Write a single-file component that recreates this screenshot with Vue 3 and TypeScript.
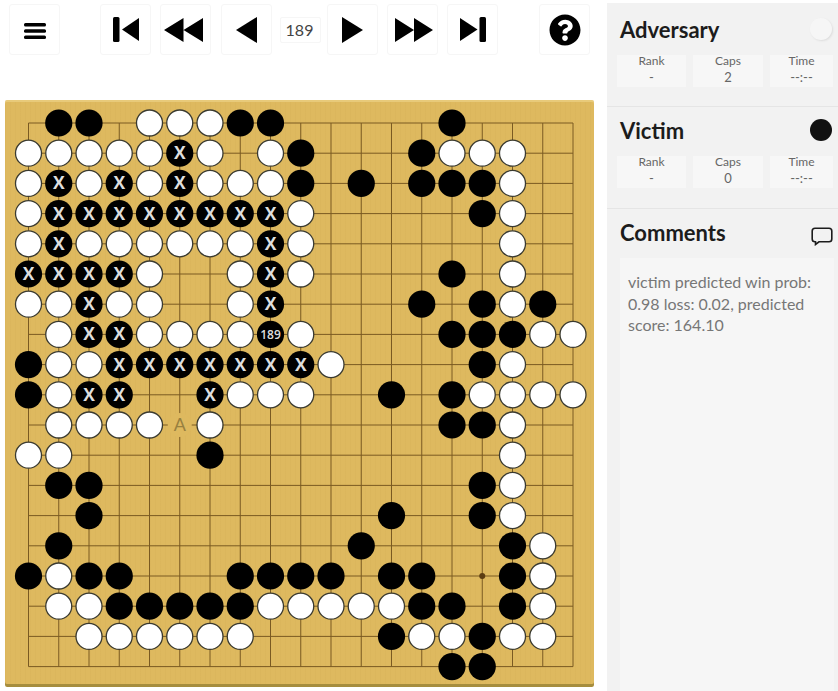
<template>
  <div class="page">
    <div class="main">
      <div class="toolbar">
        <button class="tool menu">
          <svg width="22" height="16" viewBox="0 0 22 16">
            <rect x="0" y="0" width="22" height="3.400" rx="1.500" />
            <rect x="0" y="6.300" width="22" height="3.400" rx="1.500" />
            <rect x="0" y="12.600" width="22" height="3.400" rx="1.500" />
          </svg>
        </button>
        <div class="nav">
          <button class="tool">
            <svg width="26" height="25" viewBox="0 0 26 25">
              <rect x="0" y="0" width="6.500" height="25" rx="1.500" />
              <path d="M9 12.500 26 1V24Z" />
            </svg>
          </button>
          <button class="tool shift-left">
            <svg width="39" height="24" viewBox="0 0 39 24">
              <path d="M0 12 19.500 0V24ZM19.500 12 39 0V24Z" />
            </svg>
          </button>
          <button class="tool prev">
            <svg width="21" height="26" viewBox="0 0 21 26">
              <path d="M0 13 21 0V26Z" />
            </svg>
          </button>
          <div class="move">189</div>
          <button class="tool">
            <svg width="21" height="26" viewBox="0 0 21 26">
              <path d="M21 13 0 0V26Z" />
            </svg>
          </button>
          <button class="tool shift-right">
            <svg width="38" height="24" viewBox="0 0 38 24">
              <path d="M38 12 19 0V24ZM19 12 0 0V24Z" />
            </svg>
          </button>
          <button class="tool">
            <svg width="26" height="25" viewBox="0 0 26 25">
              <rect x="19.500" y="0" width="6.500" height="25" rx="1.500" />
              <path d="M17.500 12.500 0 1V24Z" />
            </svg>
          </button>
        </div>
        <button class="tool help">
          <svg width="32" height="32" viewBox="0 0 512 512">
            <path
              d="M504 256c0 136.997-111.043 248-248 248S8 392.997 8 256C8 119.083 119.043 8 256 8s248 111.083 248 248zM262.655 90c-54.497 0-89.255 22.957-116.549 63.758-3.536 5.286-2.353 12.415 2.715 16.258l34.699 26.31c5.205 3.947 12.621 3.008 16.665-2.122 17.864-22.658 30.113-35.797 57.303-35.797 20.429 0 45.698 13.148 45.698 32.958 0 14.976-12.363 22.667-32.534 33.976C247.128 238.528 216 254.941 216 296v4c0 6.627 5.373 12 12 12h56c6.627 0 12-5.373 12-12v-1.333c0-28.462 83.186-29.647 83.186-106.667 0-58.002-60.165-102-116.531-102zM256 338c-25.365 0-46 20.635-46 46 0 25.364 20.635 46 46 46s46-20.636 46-46c0-25.365-20.635-46-46-46z"
            />
          </svg>
        </button>
      </div>

      <div class="board">
        <svg width="589" height="587" viewBox="0 0 589 587">
          <g class="grid">
            <line v-for="n in 19" :key="'h' + n" :x1="gx(0)" :x2="gx(18)" :y1="gy(n - 1)" :y2="gy(n - 1)" />
            <line v-for="n in 19" :key="'v' + n" :x1="gx(n - 1)" :x2="gx(n - 1)" :y1="gy(0)" :y2="gy(18)" />
          </g>
          <circle v-for="s in stars" :key="s.key" :cx="gx(s.c)" :cy="gy(s.r)" r="3" fill="#5c3d12" />
          <g v-for="s in stones" :key="s.key">
            <template v-if="s.kind === 'A'">
              <circle :cx="gx(s.c)" :cy="gy(s.r)" r="12" fill="#deb95f" />
              <text class="label-a" :x="gx(s.c)" :y="gy(s.r) + 5.500">A</text>
            </template>
            <template v-else-if="s.kind === 'W'">
              <circle class="white" :cx="gx(s.c)" :cy="gy(s.r)" r="13" />
            </template>
            <template v-else>
              <circle class="black" :cx="gx(s.c)" :cy="gy(s.r)" r="13.600" />
              <text v-if="s.kind === 'X'" class="label-x" :x="gx(s.c)" :y="gy(s.r) + 6">X</text>
              <text v-if="s.kind === 'N'" class="label-n" :x="gx(s.c)" :y="gy(s.r) + 4.500">189</text>
            </template>
          </g>
        </svg>
      </div>
    </div>

    <aside class="side">
      <section v-for="p in players" :key="p.name" class="player">
        <div class="head">
          <h2>{{ p.name }}</h2>
          <span class="dot" :class="p.dot"></span>
        </div>
        <div class="stats">
          <div class="stat">
            <span>Rank</span>
            <b>-</b>
          </div>
          <div class="stat">
            <span>Caps</span>
            <b>{{ p.caps }}</b>
          </div>
          <div class="stat">
            <span>Time</span>
            <b>--:--</b>
          </div>
        </div>
      </section>
      <section class="comments">
        <div class="head">
          <h2>Comments</h2>
          <svg class="bubble" width="22" height="19" viewBox="0 0 22 19">
            <path d="M4 1.200H18Q20.800 1.200 20.800 4V12Q20.800 14.800 18 14.800H8L4.500 17.500V14.800H4Q1.200 14.800 1.200 12V4Q1.200 1.200 4 1.200Z" />
          </svg>
        </div>
        <div class="comment-box">victim predicted win prob: 0.98 loss: 0.02, predicted score: 164.10</div>
      </section>
    </aside>
  </div>
</template>

<script setup lang="ts">
const position = [
  '.BB.WWWBB.....B....',
  'WWWWWXW.WB...BWWW..',
  'WXWXWXWWWB.B.BBBW..',
  'WXXXXXXXXW.....BW..',
  'WXWWWWWWXW......W..',
  'XXXXW..WXW....B.W..',
  'WWXWW..WX....B.BWB.',
  '.WXXWWWWNW....BBBWW',
  'BWWXXXXXXXW....BW..',
  'BWXX..XWWW..B.BWWWW',
  '.WWWWAW.......BBW..',
  'WW....B.........W..',
  '.BB............BW..',
  '..B.........B..BW..',
  '.B.........B....BW.',
  'BWBB...BBBB.BB..BW.',
  '.WWBBBBBWWWWWBB.BW.',
  '..WWWWWW....BWWBWW.',
  '..............BB...',
]

const STEP_X = 30.25
const STEP_Y = 30.2
const gx = (c: number) => 23.5 + c * STEP_X
const gy = (r: number) => 23 + r * STEP_Y

const stones = position.flatMap((row, r) =>
  row
    .split('')
    .map((kind, c) => ({ kind, r, c, key: `${r}-${c}` }))
    .filter((s) => s.kind !== '.'),
)

const stars = [3, 9, 15].flatMap((r) => [3, 9, 15].map((c) => ({ r, c, key: `${r}:${c}` })))

const players = [
  { name: 'Adversary', dot: 'light', caps: 2 },
  { name: 'Victim', dot: 'dark', caps: 0 },
]
</script>

<style>
body {
  background: #fff;
}
</style>

<style scoped>
.page {
  width: 838px;
  height: 691px;
  display: flex;
  overflow: hidden;
  font-family: Lato, "Open Sans", sans-serif;
}

.main {
  width: 607px;
  flex: none;
  padding: 4px 0 0 5px;
  box-sizing: border-box;
}

.toolbar {
  display: flex;
  align-items: center;
  height: 51px;
  margin-bottom: 45px;
  padding-left: 4px;
}

.nav {
  display: flex;
  align-items: center;
  gap: 9px;
  margin-left: 40px;
  margin-right: 41px;
}

.tool {
  width: 51px;
  height: 51px;
  padding: 0;
  flex: none;
  display: flex;
  align-items: center;
  justify-content: center;
  background: #fff;
  border: 1px solid #f6f6f6;
  border-radius: 3px;
  box-sizing: border-box;
}

.tool svg {
  fill: #000;
}

.menu {
  padding-top: 3px;
}

.shift-left {
  padding-right: 4px;
}

.shift-right {
  padding-left: 3px;
}

.prev {
  margin-left: 1px;
}

.move {
  width: 41px;
  height: 26px;
  margin-left: -1px;
  margin-right: -3px;
  padding-right: 2px;
  display: flex;
  align-items: center;
  justify-content: center;
  box-sizing: border-box;
  border: 1px solid #f6f6f6;
  border-radius: 2px;
  font-size: 16px;
  color: #444;
}

.board {
  width: 589px;
  height: 587px;
  background-color: #deb95f;
  background-image: repeating-linear-gradient(90deg, rgba(150, 110, 30, 0.04) 0 1px, transparent 1px 5px);
  border-radius: 2px;
  box-shadow: inset 0 -3px 0 #a68d3e, inset 0 2px 0 #e8ca7a;
}

.board svg {
  display: block;
}

.grid line {
  stroke: #7a5a22;
  stroke-width: 1;
}

.white {
  fill: #fff;
  stroke: #3a3a30;
  stroke-width: 1.300;
}

.black {
  fill: #000;
}

.label-x,
.label-n,
.label-a {
  text-anchor: middle;
  font-family: "Open Sans", Lato, sans-serif;
}

.label-x {
  fill: #dedede;
  font-size: 17.500px;
  font-weight: 700;
}

.label-n {
  fill: #dedede;
  font-size: 12px;
  font-weight: 600;
}

.label-a {
  fill: #98803f;
  font-size: 18px;
  font-family: Lato, sans-serif;
}

.side {
  flex: 1;
  margin-top: 3px;
  background: #f2f2f2;
  display: flex;
  flex-direction: column;
  min-width: 0;
}

.player {
  height: 104px;
  box-sizing: border-box;
  padding: 11px 5px 0 10px;
  border-bottom: 1px solid #e5e5e5;
}

.player + .player {
  height: 102px;
  padding-top: 8px;
}

.head {
  display: flex;
  align-items: center;
  justify-content: space-between;
  height: 30px;
  padding-left: 3px;
  padding-right: 1px;
}

h2 {
  margin: 0;
  font-size: 22px;
  font-weight: 700;
  color: #1c1c1c;
}

.dot {
  width: 22px;
  height: 22px;
  border-radius: 50%;
}

.dot.light {
  background: #f6f6f6;
  box-shadow: 1px 1px 2px #ddd;
}

.dot.dark {
  background: #111;
}

.stats {
  display: grid;
  grid-template-columns: 69px 70px 63px;
  gap: 7px;
  margin-top: 11px;
}

.stat {
  height: 32px;
  background: #f7f7f7;
  display: flex;
  flex-direction: column;
  align-items: center;
  font-size: 12px;
  line-height: 16px;
  color: #666;
}

.stat span {
  margin-top: -2px;
}

.stat b {
  font-weight: 400;
  font-size: 13px;
}

.comments {
  flex: 1;
  padding: 8px 4px 0 10px;
  display: flex;
  flex-direction: column;
  min-height: 0;
}

.bubble {
  fill: none;
  stroke: #1c1c1c;
  stroke-width: 1.600;
  margin-top: 8px;
}

.comment-box {
  flex: 1;
  margin-top: 11px;
  margin-left: 3px;
  background: #f6f6f6;
  padding: 13px 6px 0 8px;
  font-size: 16px;
  line-height: 21.500px;
  color: #777;
}
</style>
